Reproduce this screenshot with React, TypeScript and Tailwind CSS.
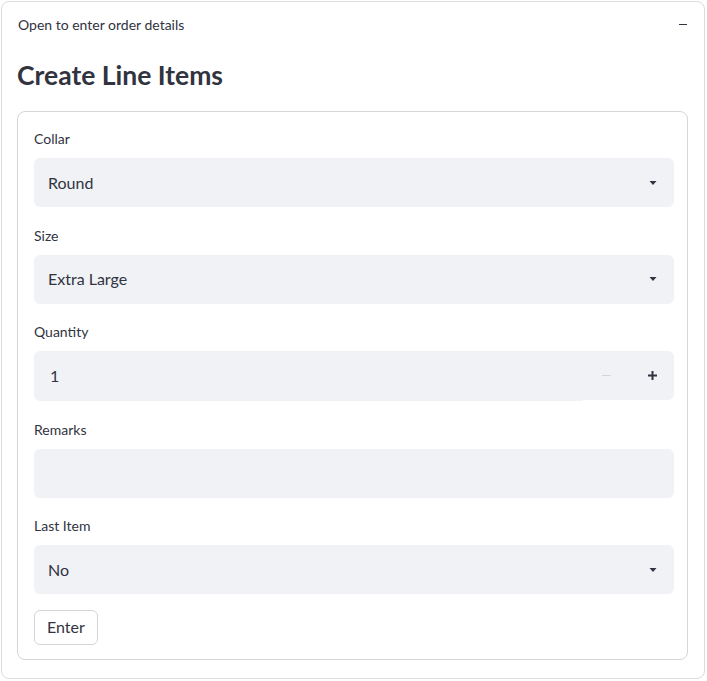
import React from "react";

const font = { fontFamily: '"Lato", "Noto Sans", sans-serif' };

function Caret() {
  return (
    <svg width="10" height="6" viewBox="0 0 10 6" className="shrink-0">
      <path d="M1.5 1 L8.5 1 L5 5 Z" fill="#31333f" />
    </svg>
  );
}

function Label({ children }: { children: React.ReactNode }) {
  return <div className="mb-[8px] h-[22px] text-[14px] leading-[22px] text-[#31333f]">{children}</div>;
}

function Select({ label, value }: { label: string; value: string }) {
  return (
    <div>
      <Label>{label}</Label>
      <div className="flex h-[49px] items-center justify-between rounded-md bg-[#f0f2f6] pl-[14px] pr-[16px] text-[16px] text-[#31333f]">
        <span>{value}</span>
        <Caret />
      </div>
    </div>
  );
}

export default function App() {
  return (
    <div className="bg-white p-px" style={font}>
      <div className="w-[704px] rounded-lg border border-[#dcdcdf] bg-white">
        {/* expander header */}
        <div className="flex h-[44px] items-center justify-between pl-[16px] pr-[17px] text-[14px] text-[#31333f]">
          <span>Open to enter order details</span>
          <span className="block h-px w-[8px] bg-[#31333f]" />
        </div>

        <div className="pb-[18px] pl-[15px] pr-[16px]">
          <h3 className="pb-[19px] pt-[12px] text-[26.5px] font-bold leading-[34px] text-[#31333f]">Create Line Items</h3>

          <div className="rounded-lg border border-[#d6d6d9] pb-[14px] pl-[16px] pr-[13px] pt-[16px]">
            <div className="flex flex-col gap-[17.5px]">
              <Select label="Collar" value="Round" />
              <Select label="Size" value="Extra Large" />

              <div>
                <Label>Quantity</Label>
                <div className="flex items-start">
                  <div className="flex h-[50px] flex-1 items-center rounded-l-md bg-[#f0f2f6] pl-[16px] text-[16px] text-[#31333f]">1</div>
                  <div className="flex h-[48.5px] w-[91px] items-center rounded-r-md bg-[#f0f2f6]">
                    <span className="flex w-[47px] justify-center">
                      <span className="block h-[1.5px] w-[9px] bg-[#d4d5d9]" />
                    </span>
                    <span className="flex w-[44px] justify-center">
                      <svg width="11" height="11" viewBox="0 0 11 11">
                        <path d="M5.5 1 V10 M1 5.5 H10" stroke="#31333f" strokeWidth="2" />
                      </svg>
                    </span>
                  </div>
                </div>
              </div>

              <div>
                <Label>Remarks</Label>
                <div className="h-[49px] rounded-md bg-[#f0f2f6]" />
              </div>

              <Select label="Last Item" value="No" />

              <div className="-mt-[2px]">
                <button className="h-[35px] rounded-md border border-[#d6d6d9] bg-white px-[12px] text-[16px] text-[#31333f]">Enter</button>
              </div>
            </div>
          </div>
        </div>
      </div>
    </div>
  );
}
